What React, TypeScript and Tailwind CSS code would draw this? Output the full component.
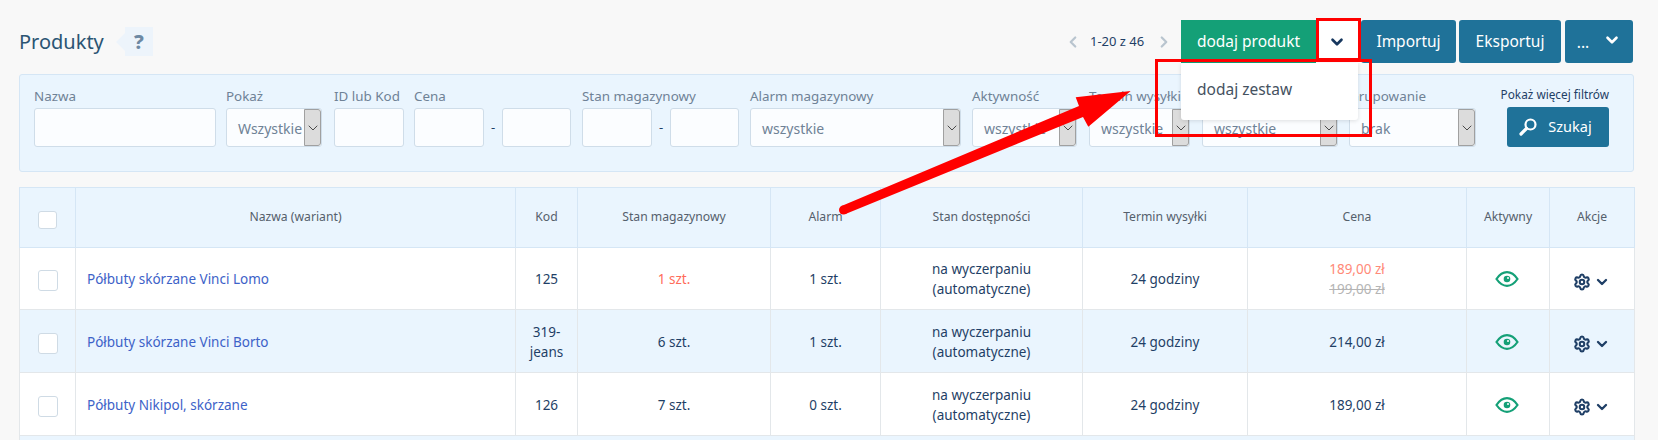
import { ChevronDown, ChevronLeft, ChevronRight, Settings } from 'lucide-react';

interface Row {
  name: string;
  code: string[];
  stock: string;
  low?: boolean;
  alarm: string;
  price: string;
  oldPrice?: string;
}

const ROWS: Row[] = [
  { name: 'Półbuty skórzane Vinci Lomo', code: ['125'], stock: '1 szt.', low: true, alarm: '1 szt.', price: '189,00 zł', oldPrice: '199,00 zł' },
  { name: 'Półbuty skórzane Vinci Borto', code: ['319-', 'jeans'], stock: '6 szt.', alarm: '1 szt.', price: '214,00 zł' },
  { name: 'Półbuty Nikipol, skórzane', code: ['126'], stock: '7 szt.', alarm: '0 szt.', price: '189,00 zł' },
];

const HEADERS = ['Nazwa (wariant)', 'Kod', 'Stan magazynowy', 'Alarm', 'Stan dostępności', 'Termin wysyłki', 'Cena', 'Aktywny', 'Akcje'];

const inputCls = 'h-[39px] rounded-[3px] border border-[#cfdde9] bg-[#fbfdff]';
const labelCls = 'h-[22px] text-[13.4px] leading-[20px] text-[#6f8296] whitespace-nowrap';
const btnCls = 'h-[43px] rounded-[3px] bg-[#1f7299] text-[15.5px] text-white flex items-center justify-center';

function Field({ label, className, children }: { label: string; className: string; children: React.ReactNode }) {
  return (
    <div className={className}>
      <div className={labelCls}>{label}</div>
      {children}
    </div>
  );
}

function SelectBox({ value }: { value: string }) {
  return (
    <div className={`${inputCls} flex items-stretch overflow-hidden`}>
      <div className="flex-1 pl-[11px] pt-[1px] flex items-center text-[14px] text-[#6f8296] whitespace-nowrap overflow-hidden">{value}</div>
      <div className="w-[17px] shrink-0 bg-[#dcdcdc] border-[1.5px] border-[#a0a0a0] rounded-r-[3px] flex items-center justify-center">
        <ChevronDown size={16} strokeWidth={1.3} className="shrink-0 text-[#333333]" />
      </div>
    </div>
  );
}

function Eye() {
  return (
    <svg width="24" height="16" viewBox="0 0 24 16" fill="none">
      <path d="M1.5 8C4.5 3.6 8 1.2 12 1.2S19.500 3.600 22.500 8C19.500 12.400 16 14.800 12 14.800S4.500 12.400 1.500 8Z" stroke="#14a077" strokeWidth="2.200" />
      <circle cx="12" cy="8" r="3.300" fill="#14a077" />
      <circle cx="13" cy="7" r="1" fill="#ffffff" />
    </svg>
  );
}

function Magnifier() {
  return (
    <svg width="18" height="18" viewBox="0 0 18 18" fill="none" stroke="#ffffff">
      <circle cx="11.500" cy="6.500" r="5" strokeWidth="2.200" />
      <path d="M7.500 10.500L2 16" strokeWidth="3.200" strokeLinecap="round" />
    </svg>
  );
}

export default function App() {
  return (
    <div className="relative w-[1658px] h-[440px] overflow-hidden bg-[#f8f8f8] font-['Noto_Sans',sans-serif] pl-[19px] pt-[20px]">
      <div className="w-[1615px] h-[43px] flex items-center">
        <h1 className="text-[20px] text-[#2b5573] leading-[30px]">Produkty</h1>
        <div className="ml-[12px] flex items-center">
          <div className="w-0 h-0 border-y-[9px] border-y-transparent border-r-[9px] border-r-[#edf4fb]" />
          <div className="w-[28px] h-[29px] bg-[#edf4fb] text-[#6d89a3] font-extrabold text-[20px] flex items-center justify-center">?</div>
        </div>

        <div className="ml-auto flex items-center">
          <ChevronLeft size={18} strokeWidth={3} className="text-[#b9c5cf]" />
          <span className="ml-[8px] w-[58px] text-[13px] text-[#1f3f66] whitespace-nowrap">1-20 z 46</span>
          <ChevronRight size={18} strokeWidth={3} className="ml-[7px] text-[#b9c5cf]" />
          <div className="relative ml-[8px] flex">
            <button className="w-[135px] h-[43px] bg-[#14a077] text-[15.5px] text-white">dodaj produkt</button>
            <button className="w-[45px] h-[43px] bg-white flex items-center justify-center pr-[3px]">
              <ChevronDown size={18} strokeWidth={3.500} className="text-[#17375e]" />
            </button>
            <div className="absolute left-0 top-[43px] z-10 w-[177px] h-[57px] bg-white rounded-b-[3px] shadow-[0_1px_4px_rgba(0,0,0,0.12)] pl-[16px] pb-[3px] flex items-center text-[15.5px] text-[#45525f]">
              dodaj zestaw
            </div>
          </div>
          <button className={`${btnCls} w-[95px]`}>Importuj</button>
          <button className={`${btnCls} w-[102px] ml-[3px]`}>Eksportuj</button>
          <button className={`${btnCls} w-[68px] ml-[4px] mr-[1px] gap-[14px]`}>
            <span className="pt-[3px]">...</span>
            <ChevronDown size={18} strokeWidth={3.500} className="mb-[3px]" />
          </button>
        </div>
      </div>

      <div className="mt-[11px] w-[1615px] h-[98px] border border-[#d5e6f5] rounded-[3px] bg-[#eaf5fe] pl-[14px] pt-[11px] flex items-start">
        <Field label="Nazwa" className="w-[182px]">
          <div className={inputCls} />
        </Field>
        <Field label="Pokaż" className="w-[96px] ml-[10px]">
          <SelectBox value="Wszystkie" />
        </Field>
        <Field label="ID lub Kod" className="w-[70px] ml-[12px]">
          <div className={inputCls} />
        </Field>
        <Field label="Cena" className="w-[157px] ml-[10px]">
          <div className="flex items-center">
            <div className={`${inputCls} w-[70px]`} />
            <span className="w-[18px] text-center text-[13px] text-[#1f3f66]">-</span>
            <div className={`${inputCls} w-[69px]`} />
          </div>
        </Field>
        <Field label="Stan magazynowy" className="w-[157px] ml-[11px]">
          <div className="flex items-center">
            <div className={`${inputCls} w-[70px]`} />
            <span className="w-[18px] text-center text-[13px] text-[#1f3f66]">-</span>
            <div className={`${inputCls} w-[69px]`} />
          </div>
        </Field>
        <Field label="Alarm magazynowy" className="w-[211px] ml-[11px]">
          <SelectBox value="wszystkie" />
        </Field>
        <Field label="Aktywność" className="w-[105px] ml-[11px]">
          <SelectBox value="wszystkie" />
        </Field>
        <Field label="Termin wysyłki" className="w-[101px] ml-[12px]">
          <SelectBox value="wszystkie" />
        </Field>
        <Field label="Producent" className="w-[136px] ml-[12px]">
          <SelectBox value="wszystkie" />
        </Field>
        <Field label="Grupowanie" className="w-[127px] ml-[11px]">
          <SelectBox value="brak" />
        </Field>
        <div className="ml-[25px] w-[108px] flex flex-col items-end">
          <div className="h-[22px] -mt-[2px] text-[11.8px] leading-[20px] text-[#1f3f66] whitespace-nowrap">Pokaż więcej filtrów</div>
          <button className="w-[102px] h-[40px] mt-[1px] pr-[5px] rounded-[3px] bg-[#1f7299] text-[14.5px] text-white flex items-center justify-center gap-[11px]">
            <Magnifier />
            Szukaj
          </button>
        </div>
      </div>

      <table className="mt-[15px] w-[1615px] table-fixed border-collapse text-[13.5px] text-[#1f3f66]">
        <colgroup>
          <col className="w-[56px]" />
          <col className="w-[440px]" />
          <col className="w-[62px]" />
          <col className="w-[193px]" />
          <col className="w-[110px]" />
          <col className="w-[202px]" />
          <col className="w-[165px]" />
          <col className="w-[219px]" />
          <col className="w-[83px]" />
          <col className="w-[85px]" />
        </colgroup>
        <thead>
          <tr className="h-[60px] bg-[#eaf5fe] text-[#55606c]">
            <th className="border border-[#d5e6f5] font-normal">
              <div className="w-[19px] h-[18px] mx-auto mt-[5px] rounded-[3px] border border-[#cfdbe5] bg-white" />
            </th>
            {HEADERS.map((h) => (
              <th key={h} className="border border-[#d5e6f5] text-[12.2px] font-normal">
                {h}
              </th>
            ))}
          </tr>
        </thead>
        <tbody>
          {ROWS.map((r, i) => (
            <tr key={r.name} className={`${i === 0 ? 'h-[62px] bg-white' : i === 1 ? 'h-[63px] bg-[#eaf5fe]' : 'h-[63px] bg-white'} text-center leading-[20px] [&>td]:pt-[1px]`}>
              <td className="border border-[#e3e7ea]">
                <div className="w-[20px] h-[21px] mx-auto mt-[3px] rounded-[3px] border border-[#cfdbe5] bg-white" />
              </td>
              <td className="border border-[#e3e7ea] pl-[11px] text-left text-[#3d62c8]">{r.name}</td>
              <td className="border border-[#e3e7ea]">
                {r.code.map((c) => (
                  <div key={c}>{c}</div>
                ))}
              </td>
              <td className={`border border-[#e3e7ea] ${r.low ? 'text-[#ff6b5a]' : ''}`}>{r.stock}</td>
              <td className="border border-[#e3e7ea]">{r.alarm}</td>
              <td className="border border-[#e3e7ea]">
                <div>na wyczerpaniu</div>
                <div>(automatyczne)</div>
              </td>
              <td className="border border-[#e3e7ea]">24 godziny</td>
              <td className="border border-[#e3e7ea]">
                <div className={r.oldPrice ? 'text-[#ff8a78]' : ''}>{r.price}</div>
                {r.oldPrice && <div className="text-[#b5b5b5] line-through">{r.oldPrice}</div>}
              </td>
              <td className="border border-[#e3e7ea]">
                <div className="flex justify-center pr-[3px]">
                  <Eye />
                </div>
              </td>
              <td className="border border-[#e3e7ea]">
                <div className="flex items-center justify-center gap-[3px] pt-[5px] pr-[2px]">
                  <Settings size={18} strokeWidth={2.750} className="text-[#1f3f66]" />
                  <ChevronDown size={16} strokeWidth={3.500} className="text-[#1f3f66]" />
                </div>
              </td>
            </tr>
          ))}
          <tr className="h-[10px] bg-[#eaf5fe]">
            <td colSpan={10} className="border border-[#e3e7ea]" />
          </tr>
        </tbody>
      </table>

      {/* annotation overlays */}
      <svg className="absolute left-0 top-0 z-20 pointer-events-none" width="1658" height="440" viewBox="0 0 1658 440">
        <circle cx="843.500" cy="210" r="4.500" fill="#ff0000" />
        <polygon points="841.500,206 1079,106 1075.700,97.300 1130.700,91 1088.300,126.700 1083,117 845.500,214" fill="#ff0000" />
      </svg>
      <div className="absolute left-[1316px] top-[18px] w-[45px] h-[43px] z-20 border-[3px] border-[#ff0000]" />
      <div className="absolute left-[1155px] top-[59px] w-[217px] h-[78px] z-20 border-[3px] border-[#ff0000]" />
    </div>
  );
}
